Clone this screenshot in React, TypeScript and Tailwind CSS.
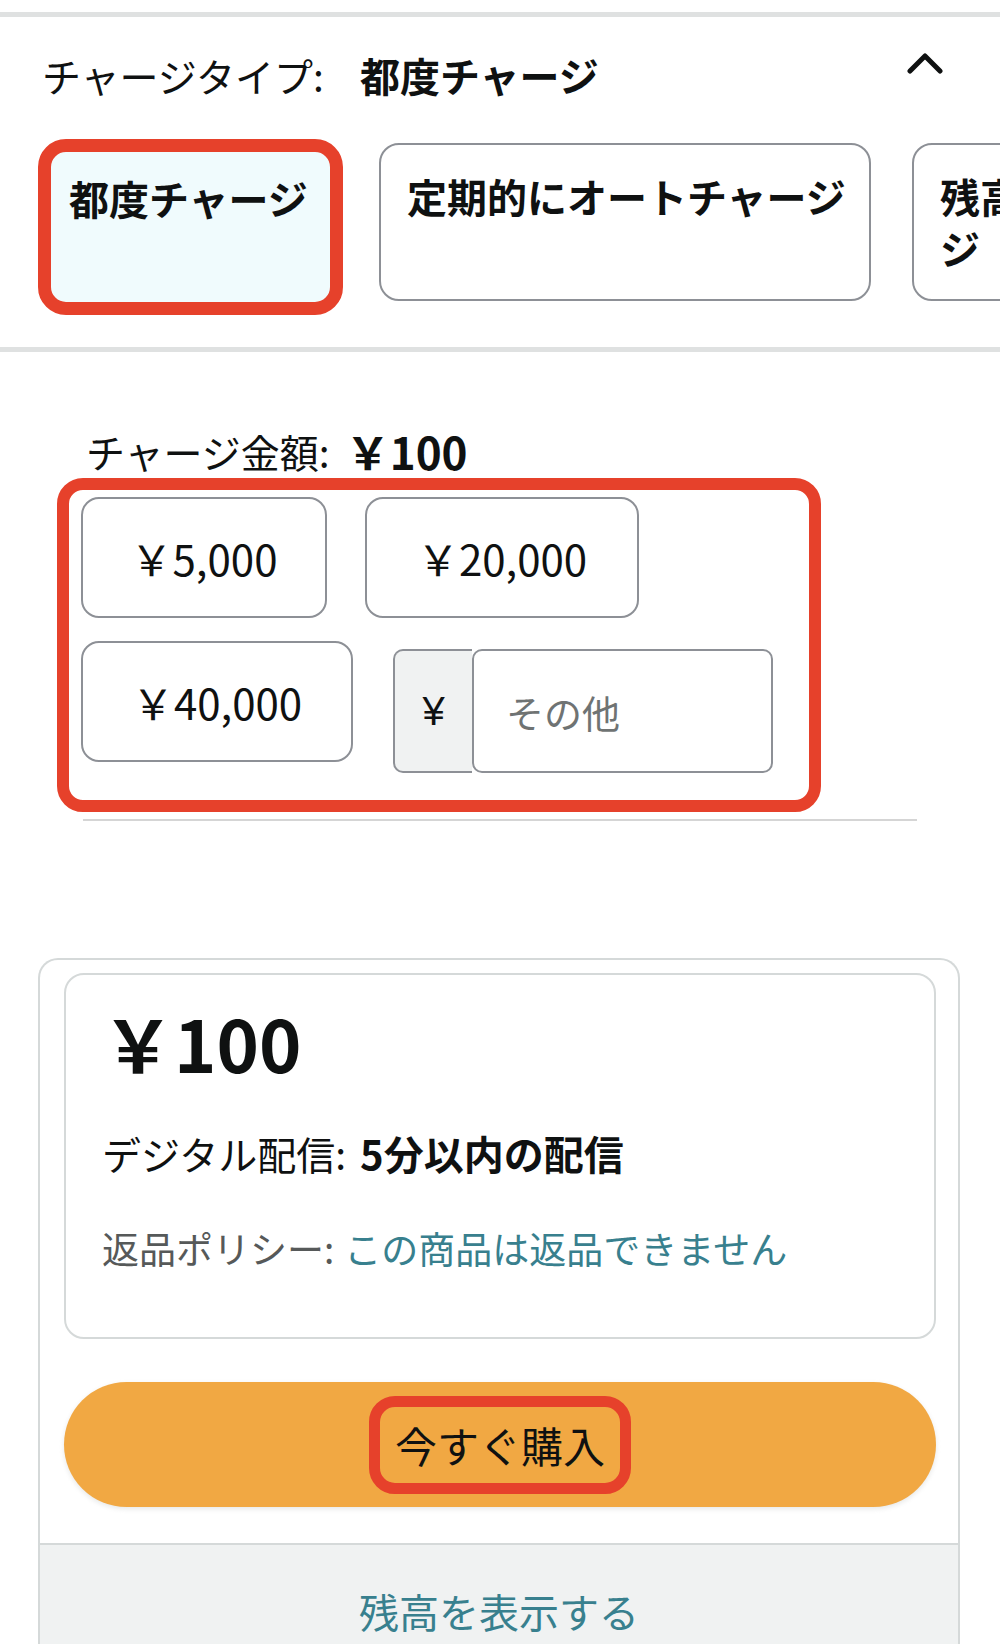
export default function App() {
  return (
    <div className="w-[1000px] min-h-[1644px] overflow-hidden bg-white text-[#0f1111] font-['Noto_Sans_CJK_JP','Noto_Sans',sans-serif]">
      <div className="h-[12px]" />
      <div className="h-[5px] bg-[#dfe1e1]" />

      {/* Charge type */}
      <section className="pt-[32px]">
        <div className="flex items-start justify-between pl-[42px] pr-[57px]">
          <div className="flex items-center text-[39px] leading-[52px]">
            <span>チャージタイプ:</span>
            <span className="ml-[36px] text-[40px] font-bold">都度チャージ</span>
          </div>
          <svg width="36" height="22" viewBox="0 0 36 22" className="mt-[3px]">
            <polyline points="3,19 18,4 33,19" fill="none" stroke="#0f1111" strokeWidth="5" strokeLinecap="round" strokeLinejoin="round" />
          </svg>
        </div>

        <div className="mt-[38px] flex items-start pl-[38px]">
          <div className="h-[176px] w-[305px] shrink-0 rounded-[28px] border-[13px] border-[#e6412b] bg-[#f0fbfd] pl-[18px] pt-[20px]">
            <div className="text-[40px] font-bold leading-[52px]">都度チャージ</div>
          </div>
          <div className="ml-[36px] mt-[4px] h-[158px] w-[492px] shrink-0 rounded-[20px] border-2 border-[#8d9096] bg-white pl-[26px] pr-[8px] pt-[25px]">
            <div className="whitespace-nowrap text-[40px] font-bold leading-[52px]">定期的にオートチャージ</div>
          </div>
          <div className="ml-[41px] mt-[4px] h-[158px] w-[390px] shrink-0 rounded-[20px] border-2 border-[#8d9096] bg-white px-[26px] pt-[25px]">
            <div className="text-[40px] font-bold leading-[52px]">残高オートチャージ</div>
          </div>
        </div>
      </section>

      <div className="mt-[32px] h-[5px] bg-[#dfe1e1]" />

      {/* Charge amount */}
      <section className="pl-[57px] pt-[73px]">
        <div className="ml-[29px] flex items-center text-[39px] leading-[52px]">
          <span>チャージ金額:</span>
          <span className="ml-[16px] text-[44px] font-bold">￥100</span>
        </div>

        <div className="mt-[1px] h-[334px] w-[764px] rounded-[26px] border-[12px] border-[#e6412b] pl-[12px] pt-[7px]">
          <div className="flex gap-[38px]">
            <button className="flex h-[121px] w-[246px] items-center justify-center rounded-[18px] border-2 border-[#8d9096] bg-white text-[42px] leading-none">
              ￥5,000
            </button>
            <button className="flex h-[121px] w-[274px] items-center justify-center rounded-[18px] border-2 border-[#8d9096] bg-white text-[42px] leading-none">
              ￥20,000
            </button>
          </div>
          <div className="mt-[23px] flex items-start">
            <button className="flex h-[121px] w-[272px] items-center justify-center rounded-[18px] border-2 border-[#8d9096] bg-white text-[42px] leading-none">
              ￥40,000
            </button>
            <div className="ml-[40px] mt-[8px] flex">
              <div className="flex h-[124px] w-[79px] items-center justify-center rounded-l-[10px] border-2 border-r-0 border-[#8d9096] bg-[#f0f2f2] text-[40px] font-['Liberation_Sans',sans-serif]">
                ¥
              </div>
              <div className="flex h-[124px] w-[301px] items-center rounded-[10px] border-2 border-[#8d9096] bg-white pl-[32px] text-[38px] text-[#6f7373]">
                その他
              </div>
            </div>
          </div>
        </div>

        <div className="ml-[26px] mt-[7px] h-[2px] w-[834px] bg-[#d5d5d5]" />
      </section>

      {/* Buy box */}
      <section className="ml-[38px] mt-[137px] w-[922px] overflow-hidden rounded-t-[20px] border-2 border-b-0 border-[#d5d9d9]">
        <div className="px-[24px] pb-[36px] pt-[13px]">
          <div className="h-[366px] w-[872px] rounded-[20px] border-2 border-[#d5d9d9] pl-[36px] pt-[27px]">
            <div className="text-[72px] font-bold leading-[80px]">￥100</div>
            <div className="mt-[45px] flex items-center text-[39px] leading-[52px]">
              <span>デジタル配信:</span>
              <span className="ml-[14px] text-[40px] font-bold">5分以内の配信</span>
            </div>
            <div className="mt-[43px] flex items-center text-[37px] leading-[52px]">
              <span className="text-[#565959]">返品ポリシー:</span>
              <span className="ml-[10px] text-[#38808e]">この商品は返品できません</span>
            </div>
          </div>

          <div className="mt-[43px] flex h-[125px] w-[872px] items-center justify-center rounded-full bg-[#f1a843] shadow-[0_2px_5px_rgba(213,217,217,0.6)]">
            <div className="flex h-[98px] w-[262px] items-center justify-center rounded-[26px] border-[11px] border-[#e6412b] text-[42px] leading-none">
              今すぐ購入
            </div>
          </div>
        </div>

        <div className="h-[120px] border-t-2 border-[#d5d9d9] bg-[#f0f2f2] pt-[40px] text-center text-[40px] leading-[52px] text-[#38808e]">
          残高を表示する
        </div>
      </section>
    </div>
  );
}
